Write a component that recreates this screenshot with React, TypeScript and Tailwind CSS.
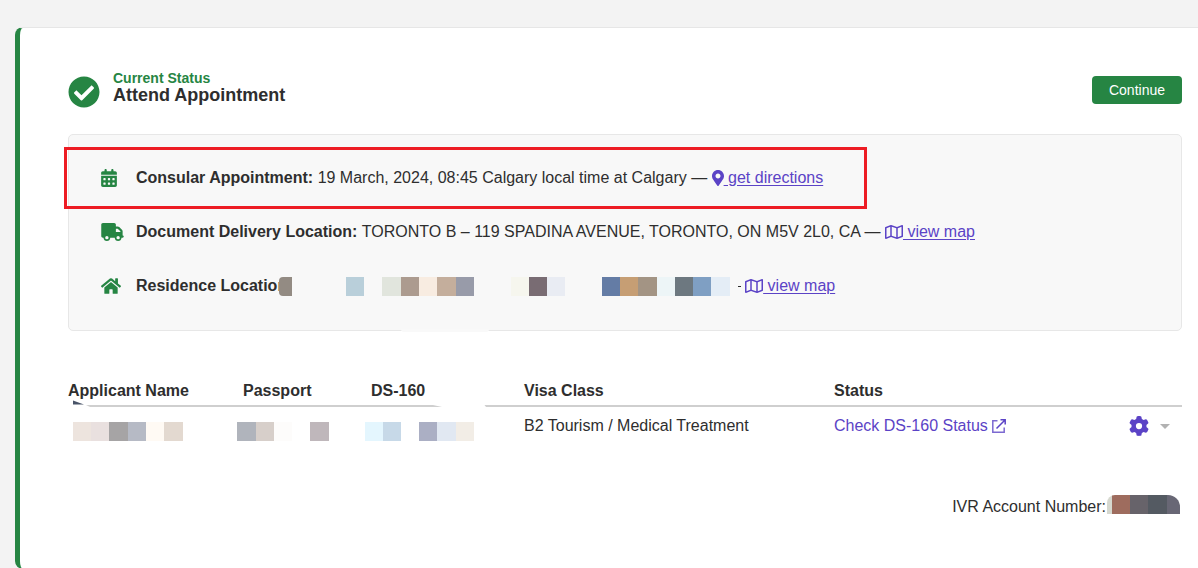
import type { ReactNode } from "react";
import { FaCheckCircle, FaHome, FaMapMarkerAlt } from "react-icons/fa";
import { FaCalendarDays, FaGear, FaRegMap, FaTruck } from "react-icons/fa6";

type Block = [width: number, color: string];

const gap = "transparent";

const address: Block[] = [
  [13, "#938b83"], [54, gap], [18, "#b9cfda"], [18, gap], [19, "#e1e5dd"], [18, "#ac9b8f"], [18, "#f8ece1"],
  [19, "#c4ae9c"], [18, "#989ba9"], [37, gap], [18, "#f6f6ee"], [18, "#796c73"], [18, "#e9ecf3"], [37, gap],
  [18, "#647ca5"], [18, "#c69e74"], [19, "#a39484"], [18, "#edf5f7"], [18, "#6d7880"], [18, "#7f9fc3"], [19, "#e4edf6"],
];
const applicant: Block[] = [
  [18, "#ede4de"], [18, "#e9e0df"], [19, "#a6a4a5"], [18, "#b6bac5"], [18, "#fffaf4"], [19, "#e3d9d0"],
];
const passport: Block[] = [[19, "#b0b4bc"], [18, "#d7cfca"], [18, "#fdfcfb"], [18, gap], [19, "#bfb7bb"]];
const ds160: Block[] = [[18, "#e4f6fe"], [18, "#c7d9e8"], [18, gap], [18, "#abafc4"], [19, "#e1e8f2"], [18, "#f2ede6"]];
const account: Block[] = [[5, "#d6d8cf"], [18, "#9e6c5e"], [18, "#67636a"], [19, "#545a62"], [13, "#686775"]];

function Redacted({ blocks, className = "" }: { blocks: Block[]; className?: string }) {
  return (
    <span className={`inline-flex h-[19px] shrink-0 overflow-hidden ${className}`} aria-hidden="true">
      {blocks.map(([width, color], i) => (
        <span key={i} className="h-full" style={{ width, backgroundColor: color }} />
      ))}
    </span>
  );
}

function ExternalIcon() {
  return (
    <svg viewBox="0 0 14 14" className="size-3.5" fill="none" stroke="currentColor" strokeWidth="1.5" aria-hidden="true">
      <path d="M5.500 1.800H.8v11.400h11.400V8.500" strokeOpacity=".8" />
      <path d="M8.500.8h4.700v4.700M13 1L4.500 9.500" />
    </svg>
  );
}

function MapLink({ icon, children }: { icon: ReactNode; children: string }) {
  return (
    <a href="#" className="flex items-center text-[#5b43c6]">
      {icon}
      <span className="whitespace-pre underline underline-offset-2">{` ${children}`}</span>
    </a>
  );
}

function DetailRow({ icon, children }: { icon: ReactNode; children: ReactNode }) {
  return (
    <li className="flex h-6 items-center">
      <span className="w-[35px] shrink-0 text-[#268543]">{icon}</span>
      <div className="flex items-center whitespace-pre">{children}</div>
    </li>
  );
}

export default function App() {
  return (
    <div className="min-h-screen overflow-hidden bg-[#f3f3f3] pt-[27px] pl-[15px] font-['Liberation_Sans',Arial,sans-serif] text-base leading-6 text-[#2e2e2e]">
      <main className="rounded-l-lg border-t border-l-[5px] border-t-[#e6e6e6] border-l-[#268543] bg-white pt-12 pr-4 pb-[50px] pl-12">
        <header className="flex items-start justify-between">
          <div className="flex items-center gap-[13px]">
            <FaCheckCircle className="size-8 text-[#268543]" />
            <div className="flex flex-col">
              <span className="-mt-2.5 text-sm leading-4 font-bold text-[#268543]">Current Status</span>
              <h1 className="text-lg leading-[18px] font-bold">Attend Appointment</h1>
            </div>
          </div>
          <button className="h-7 rounded bg-[#268543] px-[17px] text-sm text-white">Continue</button>
        </header>

        <section className="relative mt-[26px] rounded-[5px] border border-[#e7e7e7] bg-[#f8f8f8] px-8 pt-[31px] pb-8">
          <ul className="flex flex-col gap-[30px]">
            <DetailRow icon={<FaCalendarDays className="h-[18px] w-4" />}>
              <b>Consular Appointment: </b>
              19 March, 2024, 08:45 Calgary local time at Calgary —{" "}
              <MapLink icon={<FaMapMarkerAlt className="h-4 w-3" />}>get directions</MapLink>
            </DetailRow>
            <DetailRow icon={<FaTruck className="h-[18px] w-[23px]" />}>
              <b>Document Delivery Location: </b>
              TORONTO B – 119 SPADINA AVENUE, TORONTO, ON M5V 2L0, CA —{" "}
              <MapLink icon={<FaRegMap className="h-4 w-[18px]" />}>view map</MapLink>
            </DetailRow>
            <DetailRow icon={<FaHome className="h-[18px] w-5" />}>
              <b>Residence Location</b>
              <Redacted blocks={address} className="-ml-2 rounded-l-sm" />
              <span className="ml-2 h-px w-[3px] bg-[#2e2e2e]" />
              <span className="w-1" />
              <MapLink icon={<FaRegMap className="h-4 w-[18px]" />}>view map</MapLink>
            </DetailRow>
          </ul>
          <div className="pointer-events-none absolute top-3 -left-[5px] h-[62px] w-[803px] border-[3px] border-[#ed1c24]" />
          <span className="absolute -bottom-0.5 left-[332px] h-[3px] w-[88px] rounded-b bg-[#f9f9f9]" />
        </section>

        <div className="relative mt-12">
          <table className="w-full table-fixed text-left">
            <thead>
              <tr className="h-[27px] border-b-2 border-[#cfcfcf] align-top">
                <th className="w-[175px]">Applicant Name</th>
                <th className="w-32">Passport</th>
                <th className="w-[153px]">DS-160</th>
                <th className="w-[310px]">Visa Class</th>
                <th>Status</th>
                <th className="w-[53px]" aria-label="Actions" />
              </tr>
            </thead>
            <tbody>
              <tr className="h-10 align-top">
                <td className="pt-[15px] pl-[5px] leading-none"><Redacted blocks={applicant} /></td>
                <td className="pt-[15px] leading-none"><Redacted blocks={passport} className="-ml-1.5" /></td>
                <td className="pt-[15px] leading-none"><Redacted blocks={ds160} className="-ml-1.5" /></td>
                <td className="pt-[7px]">B2 Tourism / Medical Treatment</td>
                <td className="pt-[7px]">
                  <a href="#" className="inline-flex items-center gap-1 text-[#5b43c6]">
                    Check DS-160 Status
                    <ExternalIcon />
                  </a>
                </td>
                <td className="pt-[7px]">
                  <button className="flex h-6 items-center gap-[11px]" aria-label="Applicant actions">
                    <FaGear className="size-5 text-[#5b43c6]" />
                    <svg viewBox="0 0 10 5" className="h-[5px] w-2.5 fill-[#b2b2b2]"><path d="M0 0h10L5 5z" /></svg>
                  </button>
                </td>
              </tr>
            </tbody>
          </table>
          <svg viewBox="0 0 22 8" className="absolute top-5 left-0 h-2 w-[22px]" aria-hidden="true">
            <path d="M0 4h14l8 4H0z" fill="#fff" />
            <path d="M5 1.500l11 4H5z" fill="#495468" />
          </svg>
          <svg viewBox="0 0 62 4" className="absolute top-6 left-[356px] h-1 w-[62px]" aria-hidden="true">
            <path d="M0 0H59L62 4H18z" fill="#fff" />
          </svg>
        </div>

        <footer className="mt-[49px] flex items-start justify-end">
          <span>IVR Account Number:</span>
          <Redacted blocks={account} className="mr-0.5 ml-px rounded-tl-lg rounded-tr-xl" />
        </footer>
      </main>
    </div>
  );
}
